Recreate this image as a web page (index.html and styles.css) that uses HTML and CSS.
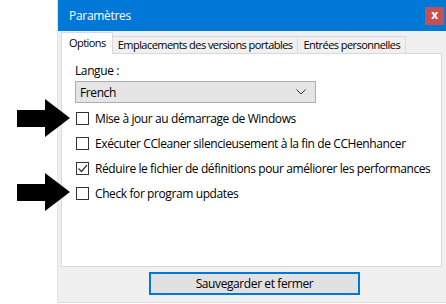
FILE: index.html
```html
<!DOCTYPE html>
<html lang="fr">
<head>
    <meta charset="UTF-8">
    <title>Paramètres</title>
    <link rel="stylesheet" href="styles.css">
</head>
<body>
    <div class="window">
        <div class="titlebar">
            <span class="title">Paramètres</span>
            <span class="close">x</span>
        </div>
        <div class="window-body">
            <div class="tabs">
                <div class="tab active">Options</div>
                <div class="tab">Emplacements des versions portables</div>
                <div class="tab">Entrées personnelles</div>
            </div>
            <div class="panel">
                <div class="field-label">Langue :</div>
                <div class="select">
                    <span>French</span>
                    <svg class="chevron" width="10" height="6" viewBox="0 0 10 6"><polyline points="0.5,0.5 5,5 9.5,0.5" fill="none" stroke="#333" stroke-width="1"/></svg>
                </div>
                <div class="options">
                    <label class="check-row"><span class="box"></span>Mise à jour au démarrage de Windows</label>
                    <label class="check-row"><span class="box"></span>Exécuter CCleaner silencieusement à la fin de CCHenhancer</label>
                    <label class="check-row"><span class="box"><svg width="11" height="11" viewBox="0 0 11 11"><polyline points="1.5,5.5 4.5,8.5 10,2" fill="none" stroke="#333" stroke-width="1.2"/></svg></span>Réduire le fichier de définitions pour améliorer les performances</label>
                    <label class="check-row"><span class="box"></span>Check for program updates</label>
                </div>
            </div>
            <div class="footer">
                <button class="save-button">Sauvegarder et fermer</button>
            </div>
        </div>
    </div>

    <svg class="arrow arrow-one" width="54" height="40" viewBox="0 0 54 40"><polygon points="0,11 28,11 28,0 53,19 28,38 28,28 0,28" fill="#000"/></svg>
    <svg class="arrow arrow-two" width="54" height="40" viewBox="0 0 54 40"><polygon points="0,11 28,11 28,0 53,19 28,38 28,28 0,28" fill="#000"/></svg>
</body>
</html>
```

FILE: styles.css
```css
body {
    margin: 0;
    padding: 0;
    width: 446px;
    height: 304px;
    overflow: hidden;
    background-color: #fff;
    font-family: "Open Sans", "Noto Sans", sans-serif;
    font-size: 12px;
    letter-spacing: -0.4px;
    color: #000;
    position: relative;
}

.window {
    margin-left: 57px;
    width: 389px;
    height: 303px;
    background-color: #f0f0f0;
    border-bottom: 1px solid #dadada;
    border-left: 1px solid #e4e4e4;
    box-sizing: border-box;
    display: flex;
    flex-direction: column;
}

.titlebar {
    height: 31px;
    background-color: #0078d7;
    display: flex;
    align-items: center;
    justify-content: space-between;
    padding-left: 11px;
    padding-right: 2px;
    flex-shrink: 0;
}

.title {
    color: #fff;
    font-size: 12px;
    letter-spacing: -0.3px;
}

.close {
    width: 19px;
    height: 18px;
    background-color: #c75050;
    color: #fff;
    font-weight: bold;
    font-size: 12px;
    line-height: 16px;
    text-align: center;
}

.window-body {
    flex: 1;
    padding: 1px 4px 0 3px;
    display: flex;
    flex-direction: column;
}

.tabs {
    display: flex;
    align-items: flex-end;
    height: 21px;
    position: relative;
    z-index: 1;
    font-size: 11px;
    letter-spacing: -0.55px;
}

.tab {
    height: 17px;
    line-height: 16px;
    padding: 0 5px;
    border: 1px solid #d9d9d9;
    border-bottom: none;
    background-color: #f0f0f0;
    box-sizing: border-box;
    white-space: nowrap;
    margin-left: -1px;
}

.tab.active {
    height: 22px;
    line-height: 20px;
    background-color: #fff;
    padding: 0 6px 0 7px;
    margin-left: 0;
    margin-bottom: -1px;
    position: relative;
}

.panel {
    height: 214px;
    box-sizing: border-box;
    background-color: #fff;
    border: 1px solid #d9d9d9;
    padding: 8px 13px 0 13px;
}

.field-label {
    height: 18px;
    line-height: 18px;
}

.select {
    width: 241px;
    height: 22px;
    box-sizing: border-box;
    margin-top: 1px;
    background-color: #e5e5e5;
    border: 1px solid #adadad;
    display: flex;
    align-items: center;
    justify-content: space-between;
    padding: 0 9px 0 4px;
}

.options {
    margin-top: 3px;
}

.check-row {
    display: flex;
    align-items: center;
    height: 25px;
    white-space: nowrap;
}

.box {
    width: 13px;
    height: 13px;
    box-sizing: border-box;
    border: 1px solid #333;
    background-color: #fff;
    margin: 0 6px 0 1px;
    display: flex;
    align-items: center;
    justify-content: center;
}

.footer {
    display: flex;
    justify-content: center;
    padding-top: 5px;
    padding-left: 6px;
}

.save-button {
    width: 211px;
    height: 23px;
    background-color: #e1e1e1;
    border: 2px solid #0078d7;
    font-family: inherit;
    font-size: 12px;
    letter-spacing: -0.4px;
    color: #000;
    padding: 0;
}

.arrow {
    position: absolute;
    left: 17px;
}

.arrow-one {
    top: 99px;
}

.arrow-two {
    top: 173px;
}
```
